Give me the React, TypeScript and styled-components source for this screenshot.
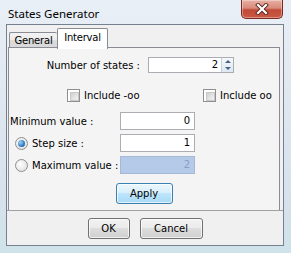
import React from "react";
import styled, { createGlobalStyle } from "styled-components";

const GlobalStyle = createGlobalStyle`
  html, body { margin: 0; padding: 0; }
  body { width: 291px; height: 253px; overflow: hidden; }
  #root { width: 291px; height: 253px; }
  * { box-sizing: border-box; }
`;

const Window = styled.div`
  width: 291px;
  height: 253px;
  display: flex;
  flex-direction: column;
  padding: 0 7px 7px 6px;
  background: linear-gradient(180deg, #e9eff6 0%, #dfe7f0 40%, #d6e1ec 80%, #cfe3ea 100%);
  font-family: "DejaVu Sans", Tahoma, sans-serif;
  font-size: 10px;
  white-space: nowrap;
  color: #000;
`;

const TitleBar = styled.div`
  height: 24px;
  display: flex;
  align-items: flex-start;
`;

const Title = styled.div`
  font-family: "Noto Sans", "Open Sans", sans-serif;
  font-size: 11.5px;
  padding: 6px 0 0 2px;
  color: #000;
`;

const CloseButton = styled.div`
  margin-left: auto;
  margin-right: 1px;
  width: 42px;
  height: 19px;
  border: 1px solid #7a2a22;
  border-top: none;
  border-radius: 0 0 5px 5px;
  background: linear-gradient(180deg, #e8b0a3 0%, #d98a7a 45%, #c14a38 55%, #c95a44 100%);
  display: flex;
  align-items: center;
  justify-content: center;
  box-shadow: inset 0 0 0 1px rgba(255, 255, 255, 0.35);
`;

const Client = styled.div`
  flex: 1;
  display: flex;
  flex-direction: column;
  background: #f0f0f0;
  border: 1px solid #75818e;
`;

const TabStrip = styled.div`
  height: 20px;
  margin: 3px 0 0 2px;
  display: flex;
  align-items: flex-end;
  position: relative;
  z-index: 1;
`;

const Tab = styled.div<{ $active?: boolean }>`
  height: ${(p) => (p.$active ? "21px" : "16px")};
  width: ${(p) => (p.$active ? "51px" : "48px")};
  margin-bottom: ${(p) => (p.$active ? "-1px" : "0")};
  border: 1px solid #898c95;
  border-bottom: ${(p) => (p.$active ? "none" : "1px solid #898c95")};
  border-right: ${(p) => (p.$active ? "1px solid #898c95" : "none")};
  border-radius: 2px 2px 0 0;
  background: ${(p) =>
    p.$active ? "#ffffff" : "linear-gradient(180deg, #f3f3f3 0%, #ebebeb 50%, #dcdcdc 51%, #d8d8d8 100%)"};
  display: flex;
  align-items: ${(p) => (p.$active ? "flex-start" : "center")};
  justify-content: center;
  padding-top: ${(p) => (p.$active ? "3px" : "0")};
  letter-spacing: -0.2px;
`;

const Panel = styled.div`
  height: 163px;
  margin: -1px 3px 0 1px;
  border: 1px solid #898c95;
  border-bottom: none;
  background: #f4f4f4;
  display: flex;
  flex-direction: column;
  padding-top: 9px;
`;

const StatesRow = styled.div`
  display: flex;
  align-items: center;
  height: 16px;
`;

const RightLabel = styled.div`
  width: 131px;
  text-align: right;
`;

const SpinBox = styled.div`
  margin-left: 8px;
  width: 86px;
  height: 16px;
  display: flex;
  border: 1px solid #abadb3;
  background: #fff;
`;

const SpinValue = styled.div`
  flex: 1;
  text-align: right;
  padding-right: 3px;
  line-height: 14px;
`;

const SpinArrows = styled.div`
  width: 12px;
  display: flex;
  flex-direction: column;
  border-left: 1px solid #c5cfdc;
  background: linear-gradient(180deg, #f4f8fc, #dde8f3);
`;

const Arrow = styled.div<{ $up?: boolean }>`
  flex: 1;
  display: flex;
  align-items: center;
  justify-content: center;
  &::before {
    content: "";
    border-left: 3px solid transparent;
    border-right: 3px solid transparent;
    ${(p) => (p.$up ? "border-bottom: 3px solid #4d6185;" : "border-top: 3px solid #4d6185;")}
  }
`;

const CheckRow = styled.div`
  display: flex;
  align-items: center;
  margin: 16px 0 0 58px;
  height: 13px;
`;

const CheckItem = styled.div<{ $width?: number }>`
  display: flex;
  align-items: center;
  gap: 4px;
  width: ${(p) => (p.$width ? `${p.$width}px` : "auto")};
`;

const CheckBox = styled.div`
  width: 13px;
  height: 13px;
  border: 1px solid #8e8f8f;
  background: #fff;
  padding: 2px;
  &::after {
    content: "";
    display: block;
    width: 100%;
    height: 100%;
    border: 1px solid #c8c8c8;
    background: linear-gradient(135deg, #cfcfcf, #f4f4f4);
  }
`;

const ValueGrid = styled.div`
  display: grid;
  grid-template-columns: 110px 75px;
  grid-auto-rows: 18px;
  row-gap: 4px;
  margin: 10px 0 0 1px;
`;

const FieldLabel = styled.div`
  display: flex;
  align-items: center;
`;

const RadioIndent = styled.div`
  display: flex;
  align-items: center;
  gap: 4px;
  padding-left: 5px;
`;

const Radio = styled.div<{ $checked?: boolean }>`
  width: 13px;
  height: 13px;
  border-radius: 50%;
  border: 1px solid #8e8f8f;
  background: radial-gradient(circle at 40% 40%, #ffffff, #d9d9d9);
  display: flex;
  align-items: center;
  justify-content: center;
  &::after {
    content: "";
    display: ${(p) => (p.$checked ? "block" : "none")};
    width: 7px;
    height: 7px;
    border-radius: 50%;
    background: radial-gradient(circle at 35% 35%, #9fd4f6, #1c6db4 70%, #0d4d8c);
  }
`;

const TextBox = styled.div<{ $disabled?: boolean }>`
  height: 18px;
  border: 1px solid ${(p) => (p.$disabled ? "#a5b8d4" : "#abadb3")};
  background: ${(p) => (p.$disabled ? "#b5c9e9" : "#fff")};
  color: ${(p) => (p.$disabled ? "#8aa0c2" : "#000")};
  text-align: right;
  padding-right: 4px;
  line-height: 16px;
`;

const ApplyRow = styled.div`
  display: flex;
  justify-content: center;
  margin-top: 9px;
`;

const Button = styled.div<{ $width: number; $default?: boolean }>`
  width: ${(p) => p.$width}px;
  height: 21px;
  border: 1px solid ${(p) => (p.$default ? "#3c7fb1" : "#707070")};
  border-radius: 3px;
  background: ${(p) =>
    p.$default
      ? "linear-gradient(180deg, #eaf6fd 0%, #d9f0fc 45%, #bee6fd 50%, #a7d9f5 100%)"
      : "linear-gradient(180deg, #f2f2f2 0%, #ebebeb 45%, #dddddd 50%, #cfcfcf 100%)"};
  box-shadow: inset 0 0 0 1px rgba(255, 255, 255, 0.7);
  display: flex;
  align-items: center;
  justify-content: center;
`;

const Footer = styled.div`
  flex: 1;
  border-top: 1px solid #a0a0a0;
  display: flex;
  justify-content: center;
  gap: 10px;
  padding-top: 7px;
`;

export default function App() {
  return (
    <>
      <GlobalStyle />
      <Window>
        <TitleBar>
          <Title>States Generator</Title>
          <CloseButton>
            <svg width="14" height="12" viewBox="0 0 14 12">
              <path d="M3 2 L11 10 M11 2 L3 10" stroke="#5a2620" strokeWidth="4" strokeLinecap="square" />
              <path d="M3 2 L11 10 M11 2 L3 10" stroke="#ffffff" strokeWidth="2.2" strokeLinecap="square" />
            </svg>
          </CloseButton>
        </TitleBar>
        <Client>
          <TabStrip>
            <Tab>General</Tab>
            <Tab $active>Interval</Tab>
          </TabStrip>
          <Panel>
            <StatesRow>
              <RightLabel>Number of states :</RightLabel>
              <SpinBox>
                <SpinValue>2</SpinValue>
                <SpinArrows>
                  <Arrow $up />
                  <Arrow />
                </SpinArrows>
              </SpinBox>
            </StatesRow>
            <CheckRow>
              <CheckItem $width={136}>
                <CheckBox />
                Include -oo
              </CheckItem>
              <CheckItem>
                <CheckBox />
                Include oo
              </CheckItem>
            </CheckRow>
            <ValueGrid>
              <FieldLabel>Minimum value :</FieldLabel>
              <TextBox>0</TextBox>
              <RadioIndent>
                <Radio $checked />
                <FieldLabel>Step size :</FieldLabel>
              </RadioIndent>
              <TextBox>1</TextBox>
              <RadioIndent>
                <Radio />
                <FieldLabel>Maximum value :</FieldLabel>
              </RadioIndent>
              <TextBox $disabled>2</TextBox>
            </ValueGrid>
            <ApplyRow>
              <Button $width={57} $default>Apply</Button>
            </ApplyRow>
          </Panel>
          <Footer>
            <Button $width={42}>OK</Button>
            <Button $width={63}>Cancel</Button>
          </Footer>
        </Client>
      </Window>
    </>
  );
}
